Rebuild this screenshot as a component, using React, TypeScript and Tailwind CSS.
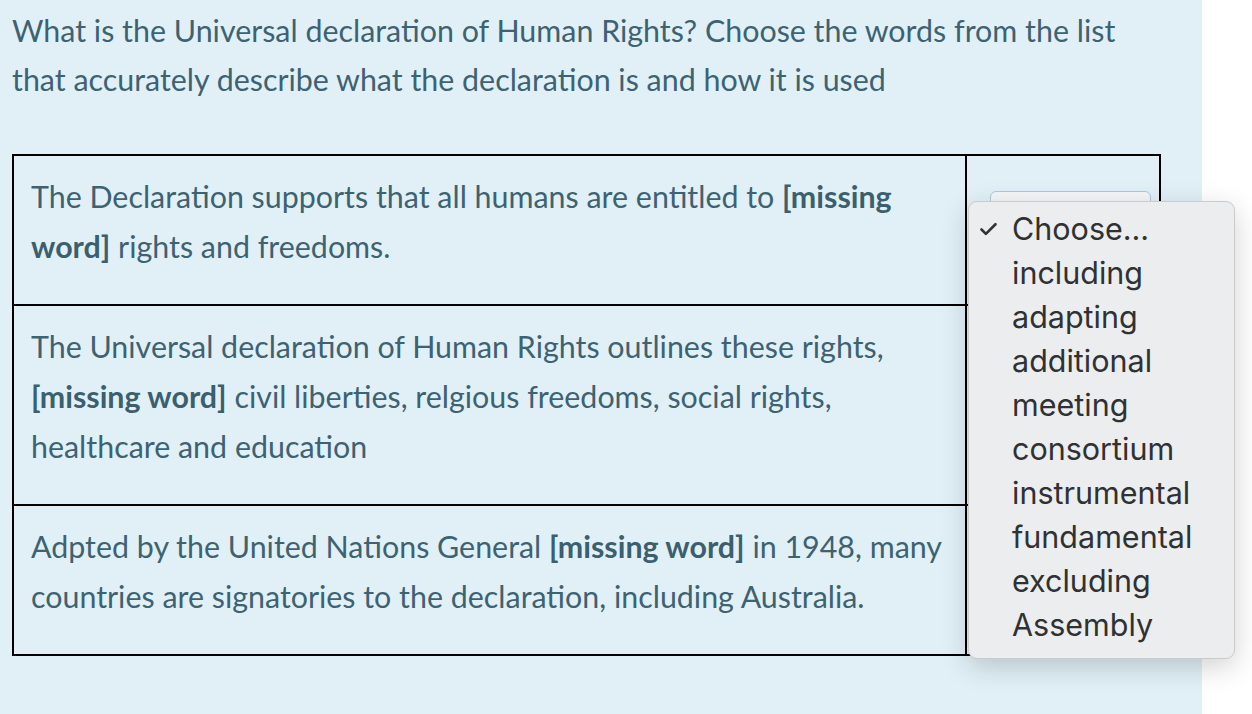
import { Check } from 'lucide-react';

const rows = [
  {
    id: 'r1',
    parts: ['The Declaration supports that all humans are entitled to ', ' rights and freedoms.'],
  },
  {
    id: 'r2',
    parts: [
      'The Universal declaration of Human Rights outlines these rights, ',
      ' civil liberties, relgious freedoms, social rights, healthcare and education',
    ],
  },
  {
    id: 'r3',
    parts: [
      'Adpted by the United Nations General ',
      ' in 1948, many countries are signatories to the declaration, including Australia.',
    ],
  },
];

const options = [
  'Choose...',
  'including',
  'adapting',
  'additional',
  'meeting',
  'consortium',
  'instrumental',
  'fundamental',
  'excluding',
  'Assembly',
];

function DropdownMenu() {
  return (
    <div className="absolute left-[1px] top-[45px] z-10 w-[267px] rounded-[9px] border border-[#c9cbcd] bg-[#ecedef] pt-[5px] pb-[11px] shadow-[0_8px_28px_rgba(0,0,0,0.18)]">
      {options.map((opt, i) => (
        <div
          key={opt}
          className="flex h-[44px] items-center text-[30.5px] leading-[44px] text-[#2f3133] font-['Inter',sans-serif]"
        >
          <span className="flex w-[43px] justify-end pr-[13px]">
            {i === 0 && <Check className="h-[21px] w-[21px] text-[#333]" strokeWidth={3} />}
          </span>
          <span>{opt}</span>
        </div>
      ))}
    </div>
  );
}

export default function App() {
  return (
    <div className="flex min-h-screen bg-white font-['Lato',sans-serif]">
      <div className="w-[1202px] min-h-[714px] bg-[#e1f0f7] px-[12px] pt-[6px]">
        <p className="w-[1150px] text-[30.4px] leading-[49px] text-[#3d6272]">
          What is the Universal declaration of Human Rights? Choose the words from the list that accurately describe
          what the declaration is and how it is used
        </p>

        <table className="mt-[50px] w-[1149px] border-collapse border-2 border-black">
          <tbody>
            {rows.map((row, i) => (
              <tr key={row.id}>
                <td className="w-[953px] border-2 border-black pl-[17px] pr-[20px] pt-[15px] pb-[33px] align-top text-[30.4px] leading-[50px] text-[#3d6272]">
                  {row.parts[0]}
                  <strong className="font-bold text-[#3a5f6e]">[missing word]</strong>
                  {row.parts[1]}
                </td>
                <td className="relative border-2 border-black align-top">
                  {i === 0 && (
                    <>
                      <div className="ml-[23px] mt-[35px] h-[40px] w-[161px] rounded-[6px] border border-[#a9c8df] bg-[#f4f6f8]" />
                      <DropdownMenu />
                    </>
                  )}
                </td>
              </tr>
            ))}
          </tbody>
        </table>
      </div>
      <div className="flex-1" />
    </div>
  );
}
